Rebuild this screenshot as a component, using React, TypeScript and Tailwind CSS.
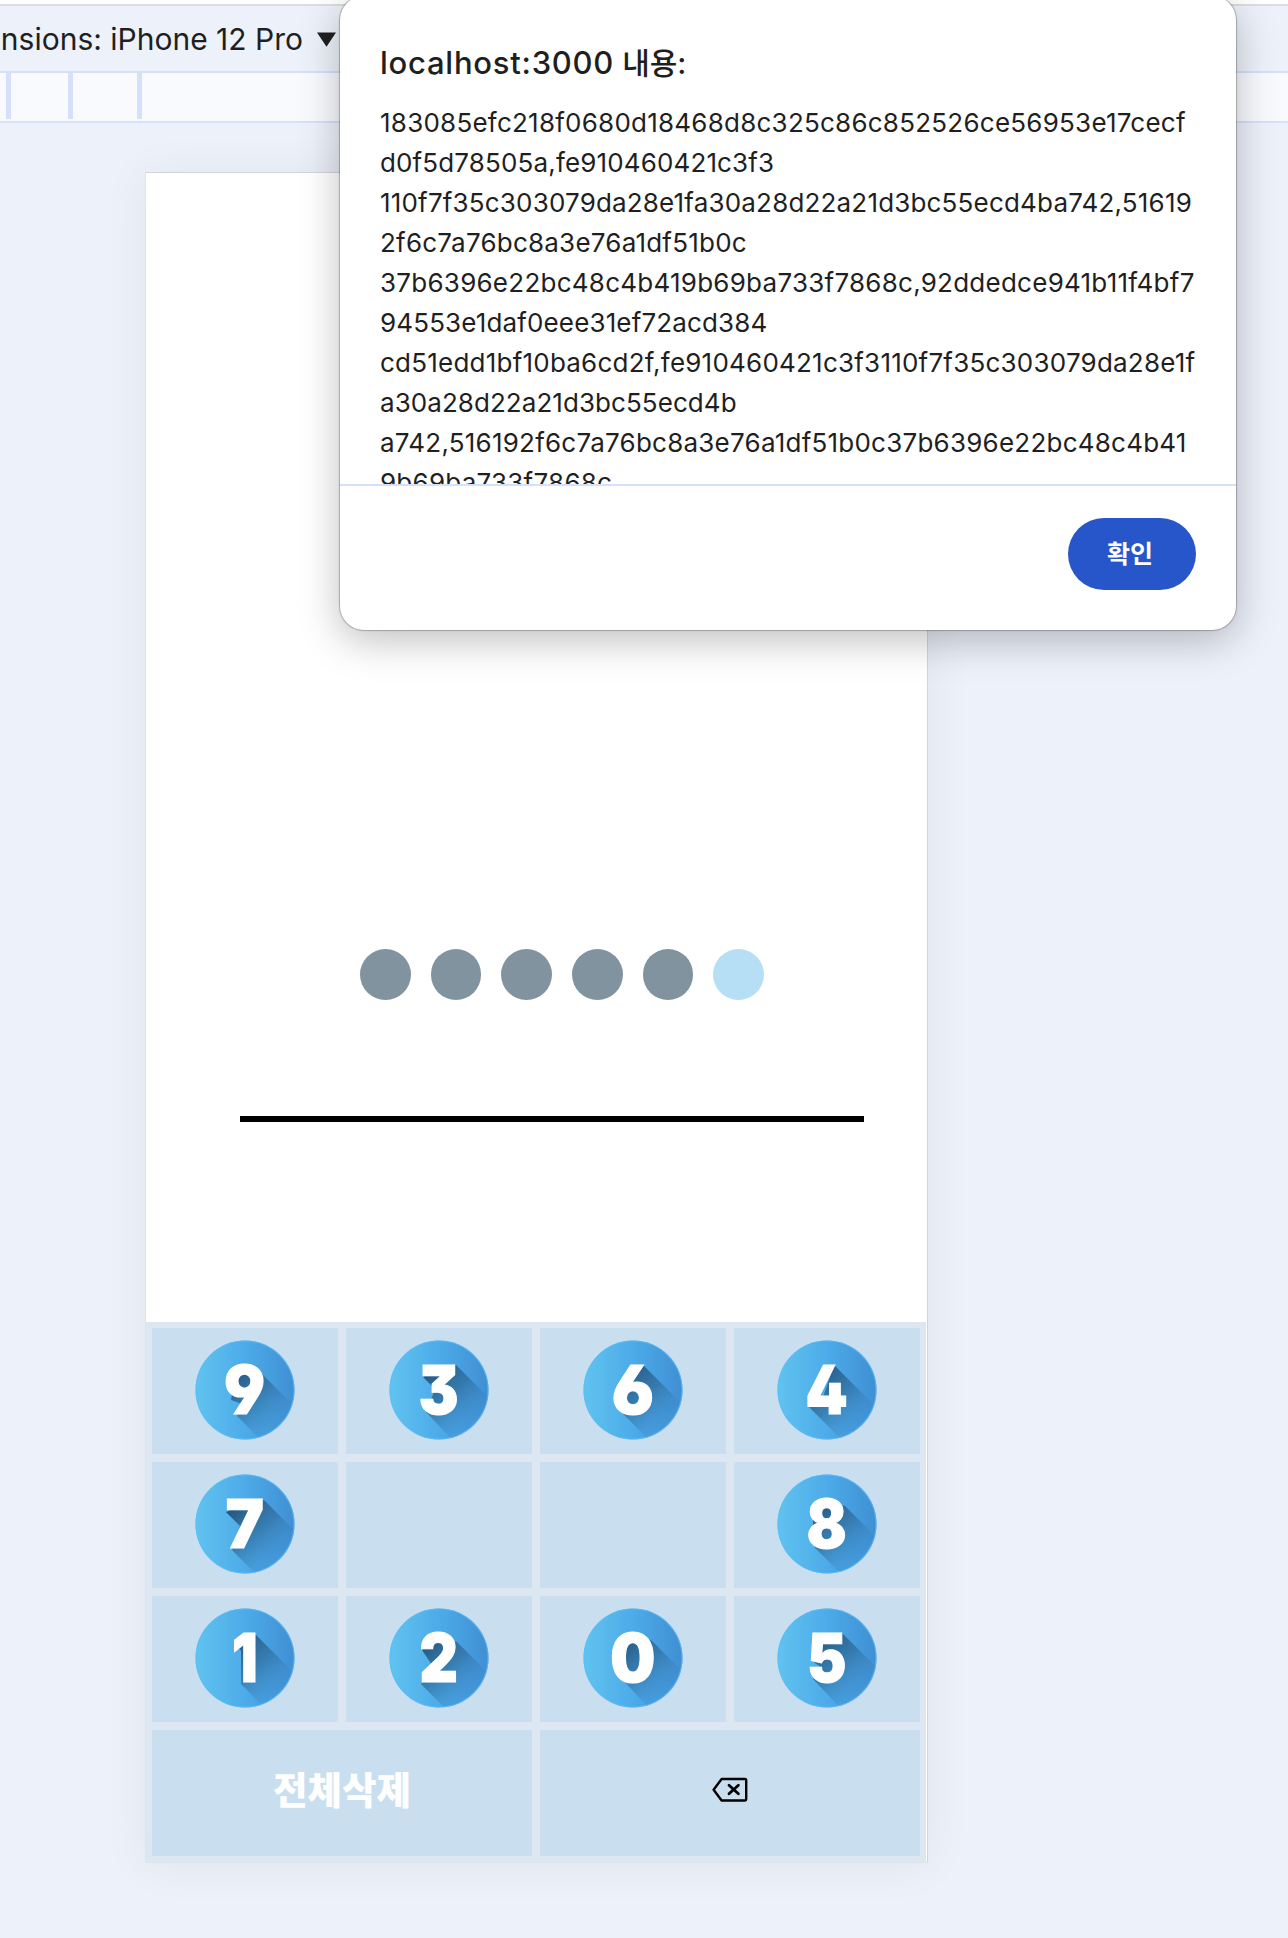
import React from "react";

type Digit = "0" | "1" | "2" | "3" | "4" | "5" | "6" | "7" | "8" | "9";

// Long-shadow silhouettes, in the 100x100 space of a key badge,
// and the horizontal squeeze of each numeral.
const glyphs: Record<Digit, { shadow: string; squeeze: number }> = {
  "0": { shadow: "40,35 60,28 69,33 120,84 120,158 38,70 38,60", squeeze: 0.94 },
  "1": { shadow: "41,37 58,27 61,27 120,86 120,150 46,76 46,43", squeeze: 0.84 },
  "2": { shadow: "33,42 50,30 68,34 120,86 120,165 32,76 45,60", squeeze: 0.88 },
  "3": { shadow: "34,37 60,25 67,25 120,78 120,160 37,72 42,60 46,49", squeeze: 0.88 },
  "4": { shadow: "45,60 57,25 120,88 120,155 30,65", squeeze: 0.89 },
  "5": { shadow: "34,52 46,30 65,25 120,80 120,160 36,71 45,60", squeeze: 0.87 },
  "6": { shadow: "40,50 60,25 120,85 120,153 39,73 40,60", squeeze: 0.97 },
  "7": { shadow: "31,38 50,30 69,26 120,77 120,160 37,76 45,52", squeeze: 0.95 },
  "8": { shadow: "36,40 55,28 68,32 120,84 120,155 38,74 36,60", squeeze: 0.87 },
  "9": { shadow: "45,32 65,32 70,37 120,87 120,154 42,76 47,64 36,60 40,38", squeeze: 0.95 },
};

function Badge({ digit }: { digit: Digit }) {
  const id = `key${digit}`;
  const { shadow, squeeze } = glyphs[digit];
  return (
    <svg viewBox="0 0 100 100" className="-mt-0.5 size-[100px]">
      <defs>
        <linearGradient id={`${id}-bg`} x1="0" y1="0" x2="1" y2="0">
          <stop offset="0" stopColor="#60c3ef" />
          <stop offset="0.5" stopColor="#4dabe9" />
          <stop offset="1" stopColor="#3f8fd3" />
        </linearGradient>
        <linearGradient id={`${id}-sh`} gradientUnits="userSpaceOnUse" x1="35" y1="35" x2="83" y2="83">
          <stop offset="0" stopColor="#1f4a70" stopOpacity="0.9" />
          <stop offset="0.5" stopColor="#2a628e" stopOpacity="0.6" />
          <stop offset="1" stopColor="#3a83bf" stopOpacity="0.1" />
        </linearGradient>
        <clipPath id={`${id}-clip`}>
          <circle cx="50" cy="50" r="49.5" />
        </clipPath>
      </defs>
      <circle cx="50" cy="50" r="49.5" fill={`url(#${id}-bg)`} />
      <polygon points={shadow} fill={`url(#${id}-sh)`} clipPath={`url(#${id}-clip)`} />
      <circle cx="50" cy="50" r="49" fill="none" stroke="#5cbcf6" strokeOpacity="0.7" strokeWidth="1.2" />
      <text
        x="0"
        y="0"
        transform={`translate(49.7 74.2) scale(${squeeze} 1)`}
        textAnchor="middle"
        fill="#ffffff"
        stroke="#ffffff"
        strokeWidth="1.2"
        className="font-['Inter'] text-[67.5px] font-black [font-feature-settings:'ss01','cv09']"
      >
        {digit}
      </text>
    </svg>
  );
}

const keys: (Digit | null)[] = ["9", "3", "6", "4", "7", null, null, "8", "1", "2", "0", "5"];

const lines = [
  { text: "183085efc218f0680d18468d8c325c86c852526ce56953e17cecf", tracking: "tracking-[0.235px]" },
  { text: "d0f5d78505a,fe910460421c3f3", tracking: "tracking-[0.14px]" },
  { text: "110f7f35c303079da28e1fa30a28d22a21d3bc55ecd4ba742,51619", tracking: "tracking-[0.18px]" },
  { text: "2f6c7a76bc8a3e76a1df51b0c", tracking: "tracking-[0.22px]" },
  { text: "37b6396e22bc48c4b419b69ba733f7868c,92ddedce941b11f4bf7", tracking: "tracking-[0.25px]" },
  { text: "94553e1daf0eee31ef72acd384", tracking: "tracking-[0.14px]" },
  { text: "cd51edd1bf10ba6cd2f,fe910460421c3f3110f7f35c303079da28e1f", tracking: "tracking-[0.22px]" },
  { text: "a30a28d22a21d3bc55ecd4b", tracking: "tracking-[0.06px]" },
  { text: "a742,516192f6c7a76bc8a3e76a1df51b0c37b6396e22bc48c4b41", tracking: "tracking-[0.23px]" },
  { text: "9b69ba733f7868c", tracking: "tracking-[0.24px]" },
];

function Toolbar() {
  return (
    <header>
      <div className="h-1 bg-white" />
      <div className="flex h-[69px] items-center border-y-2 border-t-[#dddddd] border-b-[#d5e1fb] bg-[#edf2fa] pt-0.5">
        <div className="flex w-[303px] shrink-0 justify-end whitespace-nowrap text-[30px] text-[#1f1f1f]">
          Dimensions: iPhone 12 Pro
        </div>
        <svg viewBox="0 0 20 15" className="ml-3.5 h-[15px] w-[19px]">
          <path d="M0 0H20L10 15Z" fill="#1f1f1f" />
        </svg>
      </div>
      <div className="flex h-[50px] items-start border-b-2 border-[#d5e1fb] bg-[#f8fafd]">
        <div className="ml-1.5 h-[46px] w-[5px] bg-[#d5e1fb]" />
        <div className="ml-[57px] h-[46px] w-[5px] bg-[#d5e1fb]" />
        <div className="ml-16 h-[46px] w-[5px] bg-[#d5e1fb]" />
      </div>
    </header>
  );
}

function Device() {
  return (
    <main className="mt-[49px] ml-[145px] flex h-[1691px] w-[783px] flex-col border border-[#d3d4d8] border-l-[#e0e3ea] border-b-[#dfe4ec] bg-white shadow-[0_2px_44px_rgba(0,0,0,0.06)]">
      <div className="mt-[776px] ml-[214px] flex gap-5">
        {[0, 1, 2, 3, 4, 5].map((i) => (
          <div
            key={i}
            className={i < 5 ? "size-[50.66px] rounded-full bg-[#80939e]" : "size-[50.66px] rounded-full bg-[#b6dff6]"}
          />
        ))}
      </div>
      <div className="mt-auto mb-[200px] ml-[94px] h-1.5 w-[624px] shrink-0 bg-black" />
      <div className="grid h-[540px] w-[780px] shrink-0 grid-cols-4 grid-rows-4 gap-2 bg-[#dce7f2] p-1.5">
        {keys.map((k, i) => (
          <button key={i} className="flex items-center justify-center bg-[#c9dff0]">
            {k && <Badge digit={k} />}
          </button>
        ))}
        <button className="col-span-2 flex items-center justify-center bg-[#c9dff0] pb-1 text-[37.5px] font-black text-white">
          전체삭제
        </button>
        <button className="col-span-2 flex items-center justify-center bg-[#c9dff0]">
          <svg viewBox="0 0 36 26" className="-mt-1.5 h-[26px] w-9" fill="none" stroke="#000" strokeWidth="2.4" strokeLinejoin="round" strokeLinecap="round">
            <path d="M9.6 2H33a1.2 1.2 0 0 1 1.2 1.2V22.3a1.2 1.2 0 0 1-1.2 1.2H9.6L1.6 12.7Z" />
            <path d="M17 8.2L26.4 16.8M26.4 8.2L17 16.8" strokeWidth="2.8" />
          </svg>
        </button>
      </div>
    </main>
  );
}

function AlertDialog() {
  return (
    <div
      role="alertdialog"
      className="absolute top-[-4px] left-[340px] flex h-[634px] w-[896px] flex-col rounded-[24px] bg-white text-[#1f1f1f] shadow-[0_0_1px_1px_rgba(0,0,0,0.25),0_10px_40px_rgba(0,0,0,0.26)]"
    >
      <h1 className="mt-11 ml-10 h-[46px] text-[30px] leading-[46px] font-medium">
        <span className="text-[31px] tracking-[0.75px]">localhost:3000</span> 내용:
      </h1>
      <div className="mt-[17px] h-[381px] overflow-hidden pl-10 text-[26px] leading-10 whitespace-nowrap">
        {lines.map((l) => (
          <div key={l.text} className={l.tracking}>
            {l.text}
          </div>
        ))}
      </div>
      <div className="flex flex-1 items-start justify-end border-t-2 border-[#d5e1fb] pt-8 pr-10">
        <button className="h-[72px] w-32 rounded-full bg-[#2656c9] pt-0.5 pr-1 text-[25px] font-bold text-white">
          확인
        </button>
      </div>
    </div>
  );
}

export default function App() {
  return (
    <div className="relative h-[1938px] w-[1288px] overflow-hidden bg-[#edf1fa] font-['Inter','Noto_Sans_CJK_KR',sans-serif]">
      <Toolbar />
      <Device />
      <AlertDialog />
    </div>
  );
}
